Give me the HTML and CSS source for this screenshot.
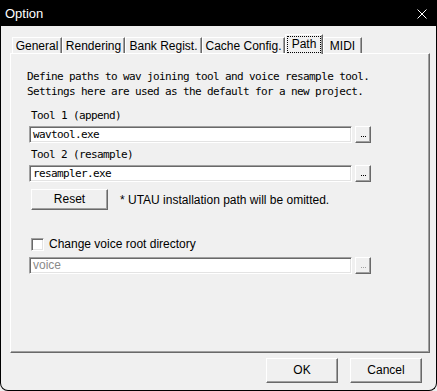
FILE: index.html
```html
<!DOCTYPE html>
<html lang="en">
<head>
    <meta charset="UTF-8">
    <title>Option</title>
    <link rel="stylesheet" href="styles.css">
</head>
<body>
    <div class="window">
        <div class="titlebar">
            <span class="title">Option</span>
            <svg class="close" width="10" height="10" viewBox="0 0 10 10">
                <path d="M0.5 0.5 L9.5 9.5 M9.5 0.5 L0.5 9.5" stroke="#fff" stroke-width="1" fill="none"/>
            </svg>
        </div>

        <div class="tabs">
            <div class="tab" style="width: 50px;">General</div>
            <div class="tab" style="width: 63px;">Rendering</div>
            <div class="tab" style="width: 77px;">Bank Regist.</div>
            <div class="tab" style="width: 83px;">Cache Config.</div>
            <div class="tab tab-active" style="width: 38px;"><span class="focus">Path</span></div>
            <div class="tab" style="width: 39px;">MIDI</div>
        </div>

        <div class="panel">
            <p class="desc">Define paths to wav joining tool and voice resample tool.<br>Settings here are used as the default for a new project.</p>

            <label class="field-label first">Tool 1 (append)</label>
            <div class="path-row">
                <div class="textbox">wavtool.exe</div>
                <div class="browse"><span class="dots"></span></div>
            </div>

            <label class="field-label">Tool 2 (resample)</label>
            <div class="path-row">
                <div class="textbox">resampler.exe</div>
                <div class="browse"><span class="dots"></span></div>
            </div>

            <div class="reset-row">
                <div class="btn reset">Reset</div>
                <span class="note">* UTAU installation path will be omitted.</span>
            </div>

            <div class="check-row">
                <span class="checkbox"></span>
                <span class="check-label">Change voice root directory</span>
            </div>

            <div class="path-row voice-row">
                <div class="textbox disabled">voice</div>
                <div class="browse disabled"><span class="dots"></span></div>
            </div>
        </div>

        <div class="footer">
            <div class="btn dlg">OK</div>
            <div class="btn dlg">Cancel</div>
        </div>
    </div>
</body>
</html>
```

FILE: styles.css
```css
body {
    margin: 0;
    padding: 0;
    background-color: #f0f0f0;
    font-family: 'Liberation Sans', Arial, sans-serif;
    font-size: 12px;
    color: #000;
}

.window {
    width: 437px;
    height: 391px;
    box-sizing: border-box;
    border: 1px solid #000;
    border-top: 0;
    border-radius: 0 0 8px 8px;
    background-color: #f0f0f0;
    overflow: hidden;
    display: flex;
    flex-direction: column;
}

.titlebar {
    height: 26px;
    background-color: #000;
    color: #fff;
    display: flex;
    align-items: center;
    justify-content: space-between;
    padding: 0 9px 0 4px;
    flex-shrink: 0;
}

.title {
    font-size: 13px;
    margin-top: 1px;
}

.close {
    display: block;
    margin-top: 1px;
}

/* tab strip */
.tabs {
    display: flex;
    align-items: flex-end;
    height: 19px;
    margin: 8px 0 0 11px;
    flex-shrink: 0;
}

.tab {
    height: 16px;
    box-sizing: border-box;
    border-top: 1px solid #fff;
    border-left: 1px solid #fff;
    border-right: 1px solid #696969;
    box-shadow: inset -1px 0 #a0a0a0;
    text-align: center;
    line-height: 16px;
    white-space: nowrap;
}

.tab-active {
    height: 20px;
    margin-bottom: -1px;
    position: relative;
    z-index: 1;
    background-color: #f0f0f0;
    padding: 1px 1px 0;
}

.focus {
    display: block;
    height: 17px;
    line-height: 15px;
    box-sizing: border-box;
    border: 1px dotted #000;
}

/* tab page */
.panel {
    width: 420px;
    height: 300px;
    box-sizing: border-box;
    margin-left: 9px;
    border-top: 1px solid #fff;
    border-left: 1px solid #fff;
    border-right: 1px solid #696969;
    border-bottom: 1px solid #696969;
    box-shadow: inset -1px -1px #a0a0a0;
    flex-shrink: 0;
}

.desc,
.field-label,
.textbox {
    font-family: 'DejaVu Sans Mono', 'Liberation Mono', monospace;
    font-size: 11px;
    letter-spacing: -0.62px;
}

.desc {
    margin: 15px 0 0 16px;
    line-height: 15px;
}

.field-label {
    display: block;
    margin: 5px 0 0 20px;
    line-height: 14px;
}

.field-label.first {
    margin-top: 10px;
}

.path-row {
    display: flex;
    gap: 3px;
    margin: 3px 0 0 18px;
}

.field-label + .path-row {
    margin-top: 3px;
}

.textbox {
    width: 323px;
    height: 17px;
    box-sizing: border-box;
    background-color: #fff;
    border-top: 1px solid #a0a0a0;
    border-left: 1px solid #a0a0a0;
    border-right: 1px solid #fff;
    border-bottom: 1px solid #fff;
    box-shadow: inset 1px 1px #696969, inset -1px -1px #e3e3e3;
    padding-left: 3px;
    line-height: 15px;
    white-space: nowrap;
}

.textbox.disabled {
    font-family: 'Liberation Sans', Arial, sans-serif;
    font-size: 12px;
    letter-spacing: 0;
    color: #8a8a8a;
}

.browse {
    width: 16px;
    height: 17px;
    box-sizing: border-box;
    border-top: 1px solid #fff;
    border-left: 1px solid #fff;
    border-right: 1px solid #696969;
    border-bottom: 1px solid #696969;
    box-shadow: inset -1px -1px #a0a0a0;
    display: flex;
    justify-content: center;
    align-items: flex-end;
    padding-bottom: 5px;
}

/* three 1px dots, as the tiny "..." glyph */
.dots {
    width: 5px;
    height: 1px;
    background: linear-gradient(to right, #000 1px, transparent 1px, transparent 2px, #000 2px, #000 3px, transparent 3px, transparent 4px, #000 4px);
}

.browse.disabled .dots {
    background: linear-gradient(to right, #a0a0a0 1px, transparent 1px, transparent 2px, #a0a0a0 2px, #a0a0a0 3px, transparent 3px, transparent 4px, #a0a0a0 4px);
}

.btn {
    box-sizing: border-box;
    background-color: #f0f0f0;
    border-top: 1px solid #fff;
    border-left: 1px solid #fff;
    border-right: 1px solid #696969;
    border-bottom: 1px solid #696969;
    box-shadow: inset -1px -1px #a0a0a0;
    text-align: center;
}

.reset-row {
    display: flex;
    align-items: center;
    margin: 7px 0 0 20px;
}

.reset {
    width: 77px;
    height: 21px;
    line-height: 19px;
}

.note {
    margin-left: 12px;
}

.check-row {
    display: flex;
    align-items: center;
    margin: 28px 0 0 20px;
    height: 13px;
}

.checkbox {
    width: 13px;
    height: 13px;
    box-sizing: border-box;
    background-color: #fff;
    border-top: 1px solid #a0a0a0;
    border-left: 1px solid #a0a0a0;
    border-right: 1px solid #fff;
    border-bottom: 1px solid #fff;
    box-shadow: inset 1px 1px #696969, inset -1px -1px #e3e3e3;
}

.check-label {
    margin-left: 5px;
    line-height: 13px;
}

.voice-row {
    margin-top: 6px;
}

/* dialog buttons */
.footer {
    display: flex;
    justify-content: flex-end;
    gap: 12px;
    padding-right: 14px;
    margin-top: 5px;
}

.dlg {
    width: 72px;
    height: 25px;
    line-height: 23px;
}
```
